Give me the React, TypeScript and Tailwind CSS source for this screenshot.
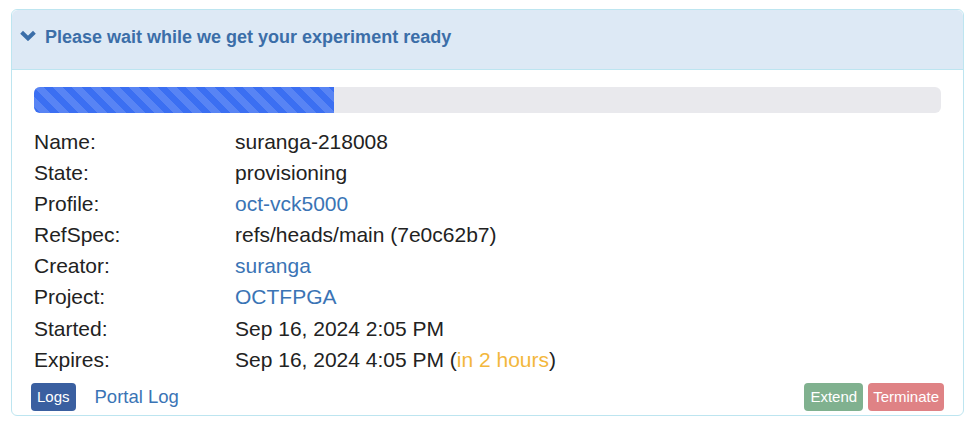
import React from 'react';

const ROWS: { label: string; value: React.ReactNode }[] = [
  { label: 'Name:', value: 'suranga-218008' },
  { label: 'State:', value: 'provisioning' },
  { label: 'Profile:', value: <a className="text-[#3a74b5]">oct-vck5000</a> },
  { label: 'RefSpec:', value: 'refs/heads/main (7e0c62b7)' },
  { label: 'Creator:', value: <a className="text-[#3a74b5]">suranga</a> },
  { label: 'Project:', value: <a className="text-[#3a74b5]">OCTFPGA</a> },
  { label: 'Started:', value: 'Sep 16, 2024 2:05 PM' },
  {
    label: 'Expires:',
    value: (
      <>
        Sep 16, 2024 4:05 PM (<span className="text-[#f3b73c]">in 2 hours</span>)
      </>
    ),
  },
];

export default function App() {
  return (
    <div className="min-h-[428px] bg-white pt-[9px] pl-[11px] font-['Liberation_Sans',Arial,sans-serif] text-[#222]">
      <div className="w-[953px] rounded-[6px] border border-[#bde5f0] bg-white">
        {/* Header */}
        <div className="flex h-[60px] items-center gap-[9px] rounded-t-[6px] border-b border-[#bde5f0] bg-[#dde9f5] pb-[5px] pl-[8px] text-[18px] font-bold text-[#3b6ea8]">
          <svg width="16" height="11" viewBox="0 0 16 11" className="mt-[-3px]">
            <path d="M1.6 2.2 L8 8.4 L14.4 2.2" fill="none" stroke="#3b6ea8" strokeWidth="4" />
          </svg>
          <span>Please wait while we get your experiment ready</span>
        </div>

        {/* Body */}
        <div className="px-[22px] pt-[17px] pb-[4px]">
          <div className="h-[26px] w-full overflow-hidden rounded-[6px] bg-[#e9e9ed]">
            <div
              className="h-full w-[300px] bg-[#3b6ff2] bg-[length:19px_19px] bg-[linear-gradient(45deg,rgba(255,255,255,0.15)_25%,transparent_25%,transparent_50%,rgba(255,255,255,0.15)_50%,rgba(255,255,255,0.15)_75%,transparent_75%,transparent)]"
            />
          </div>

          <div className="mt-[13px] text-[21px] leading-[31.1px]">
            {ROWS.map((r) => (
              <div key={r.label} className="flex">
                <div className="w-[201px] shrink-0">{r.label}</div>
                <div>{r.value}</div>
              </div>
            ))}
          </div>

          <div className="mt-[8px] flex items-center">
            <button className="ml-[-3px] h-[28px] rounded-[4px] bg-[#3a5fa0] px-[6px] text-[15px] text-white">
              Logs
            </button>
            <a className="ml-[19px] text-[18.5px] text-[#3a74b5]">Portal Log</a>
            <div className="ml-auto mr-[-3px] flex gap-[5px]">
              <button className="h-[28px] rounded-[4px] bg-[#80b18f] px-[6px] text-[15px] text-white">
                Extend
              </button>
              <button className="h-[28px] rounded-[4px] bg-[#df8285] px-[5px] text-[15px] text-white">
                Terminate
              </button>
            </div>
          </div>
        </div>
      </div>
    </div>
  );
}
